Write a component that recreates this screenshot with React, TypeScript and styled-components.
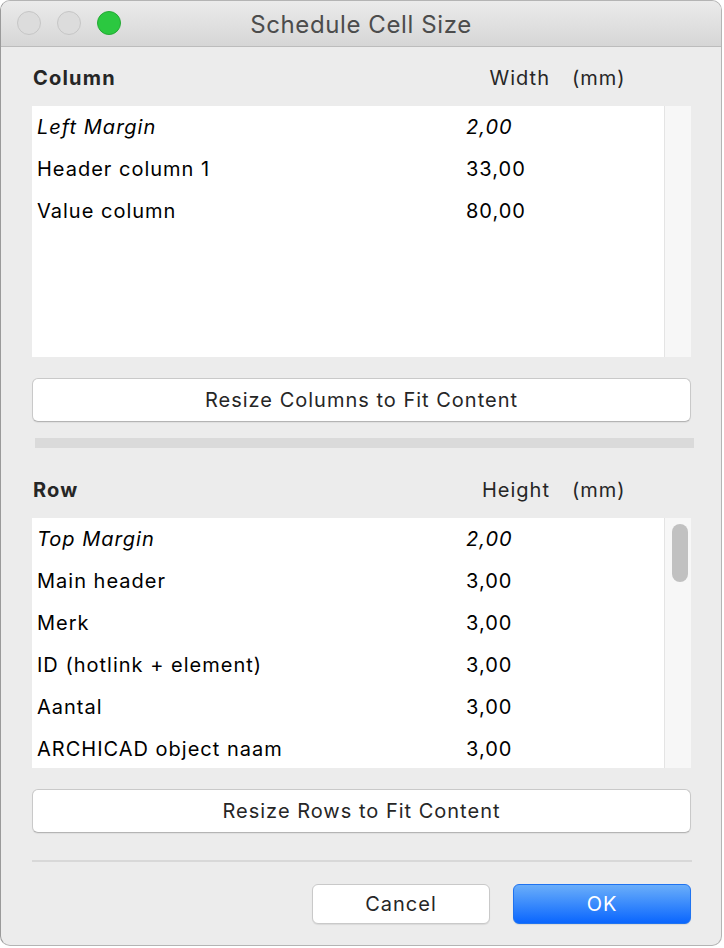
import styled, { createGlobalStyle } from 'styled-components';

interface Item {
  name: string
  value: string
  margin?: boolean
}

const columns: Item[] = [
  { name: 'Left Margin', value: '2,00', margin: true },
  { name: 'Header column 1', value: '33,00' },
  { name: 'Value column', value: '80,00' },
];

const rows: Item[] = [
  { name: 'Top Margin', value: '2,00', margin: true },
  { name: 'Main header', value: '3,00' },
  { name: 'Merk', value: '3,00' },
  { name: 'ID (hotlink + element)', value: '3,00' },
  { name: 'Aantal', value: '3,00' },
  { name: 'ARCHICAD object naam', value: '3,00' },
];

function App() {
  return (
    <>
      <GlobalStyle />
      <Window>
        <TitleBar>
          <Lights>
            <Light />
            <Light />
            <Light green />
          </Lights>
          <Title>Schedule Cell Size</Title>
        </TitleBar>
        <Content>
          <SectionHeader>
            <HeaderTitle>Column</HeaderTitle>
            <HeaderLabel>Width</HeaderLabel>
            <HeaderUnit>(mm)</HeaderUnit>
          </SectionHeader>
          <ListBox height={251}>
            <ListBody>
              {columns.map((c) => (
                <ListRow key={c.name} italic={c.margin}>
                  <RowName>{c.name}</RowName>
                  <RowValue>{c.value}</RowValue>
                </ListRow>
              ))}
            </ListBody>
            <ScrollTrack />
          </ListBox>
          <WideButton>Resize Columns to Fit Content</WideButton>
          <Splitter />
          <SectionHeader spaced>
            <HeaderTitle>Row</HeaderTitle>
            <HeaderLabel>Height</HeaderLabel>
            <HeaderUnit>(mm)</HeaderUnit>
          </SectionHeader>
          <ListBox height={250}>
            <ListBody>
              {rows.map((r) => (
                <ListRow key={r.name} italic={r.margin}>
                  <RowName>{r.name}</RowName>
                  <RowValue>{r.value}</RowValue>
                </ListRow>
              ))}
            </ListBody>
            <ScrollTrack>
              <ScrollThumb />
            </ScrollTrack>
          </ListBox>
          <WideButton>Resize Rows to Fit Content</WideButton>
          <Divider />
          <Footer>
            <DialogButton>Cancel</DialogButton>
            <DialogButton primary>OK</DialogButton>
          </Footer>
        </Content>
      </Window>
    </>
  );
}

export default App;

const GlobalStyle = createGlobalStyle`
  html, body {
    margin: 0;
    padding: 0;
    background: #ffffff;
  }
  body {
    font-family: Inter, "Open Sans", sans-serif;
    color: #000000;
  }
`;

const Window = styled.div`
  width: 722px;
  height: 946px;
  box-sizing: border-box;
  border: 1px solid #b4b4b4;
  border-left-color: #9a9a9a;
  border-radius: 10px;
  overflow: hidden;
  background: #ececec;
  display: flex;
  flex-direction: column;
`;

const TitleBar = styled.div`
  position: relative;
  height: 45px;
  flex-shrink: 0;
  display: flex;
  align-items: center;
  justify-content: center;
  background: linear-gradient(#ebebeb, #d6d6d6);
  border-bottom: 1px solid #bcbcbc;
`;

const Lights = styled.div`
  position: absolute;
  left: 16px;
  top: 10px;
  display: flex;
  gap: 16px;
`;

const Light = styled.span<{ green?: boolean }>`
  width: 24px;
  height: 24px;
  box-sizing: border-box;
  border-radius: 50%;
  background: ${(p) => (p.green ? '#2bc840' : '#dcdcdc')};
  border: 1px solid ${(p) => (p.green ? '#25a935' : '#c6c6c6')};
`;

const Title = styled.span`
  font-size: 24px;
  color: #4c4c4c;
  letter-spacing: 0.6px;
  margin-top: 1px;
`;

const Content = styled.div`
  flex: 1;
  display: flex;
  flex-direction: column;
  padding: 3px 30px 0 31px;
`;

const SectionHeader = styled.div<{ spaced?: boolean }>`
  height: 56px;
  margin-top: ${(p) => (p.spaced ? '14px' : '0')};
  display: flex;
  align-items: center;
  font-size: 20px;
  letter-spacing: 1px;
  color: #262626;
`;

const HeaderTitle = styled.span`
  flex: 1;
  font-weight: 700;
  padding-left: 1px;
  letter-spacing: 1.2px;
`;

const HeaderLabel = styled.span``;

const HeaderUnit = styled.span`
  margin-left: 22px;
  width: 119px;
`;

const ListBox = styled.div<{ height: number }>`
  height: ${(p) => p.height}px;
  flex-shrink: 0;
  display: flex;
  overflow: hidden;
`;

const ListBody = styled.div`
  flex: 1;
  background: #ffffff;
`;

const ListRow = styled.div<{ italic?: boolean }>`
  height: 42px;
  display: flex;
  align-items: center;
  padding-left: 5px;
  font-size: 20px;
  letter-spacing: 1px;
  font-style: ${(p) => (p.italic ? 'italic' : 'normal')};
`;

const RowName = styled.span`
  width: 429px;
`;

const RowValue = styled.span``;

const ScrollTrack = styled.div`
  width: 27px;
  background: #f7f7f7;
  border-left: 1px solid #e4e4e4;
  padding: 6px 0 0 7px;
  box-sizing: border-box;
`;

const ScrollThumb = styled.div`
  width: 16px;
  height: 58px;
  border-radius: 8px;
  background: #c1c1c1;
`;

const WideButton = styled.button`
  margin-top: 21px;
  height: 44px;
  width: 659px;
  background: #ffffff;
  border: 1px solid #c9c9c9;
  border-bottom-color: #b4b4b4;
  border-radius: 6px;
  font-family: inherit;
  font-size: 20px;
  letter-spacing: 1px;
  color: #262626;
  box-shadow: 0 1px 1px rgba(0, 0, 0, 0.06);
`;

const Splitter = styled.div`
  margin: 16px 0 0 3px;
  height: 10px;
  width: 659px;
  background: #dadada;
`;

const Divider = styled.div`
  margin-top: 27px;
  height: 2px;
  width: 660px;
  background: #d8d8d8;
`;

const Footer = styled.div`
  display: flex;
  justify-content: flex-end;
  gap: 23px;
  margin-top: 22px;
`;

const DialogButton = styled.button<{ primary?: boolean }>`
  width: 178px;
  height: 40px;
  border-radius: 6px;
  font-family: inherit;
  font-size: 20px;
  letter-spacing: 1px;
  border: 1px solid ${(p) => (p.primary ? '#1f73f0' : '#c9c9c9')};
  background: ${(p) => (p.primary ? 'linear-gradient(#6aaefa, #0a66fe)' : '#ffffff')};
  color: ${(p) => (p.primary ? '#ffffff' : '#262626')};
  box-shadow: 0 1px 1px rgba(0, 0, 0, 0.08);
`;
